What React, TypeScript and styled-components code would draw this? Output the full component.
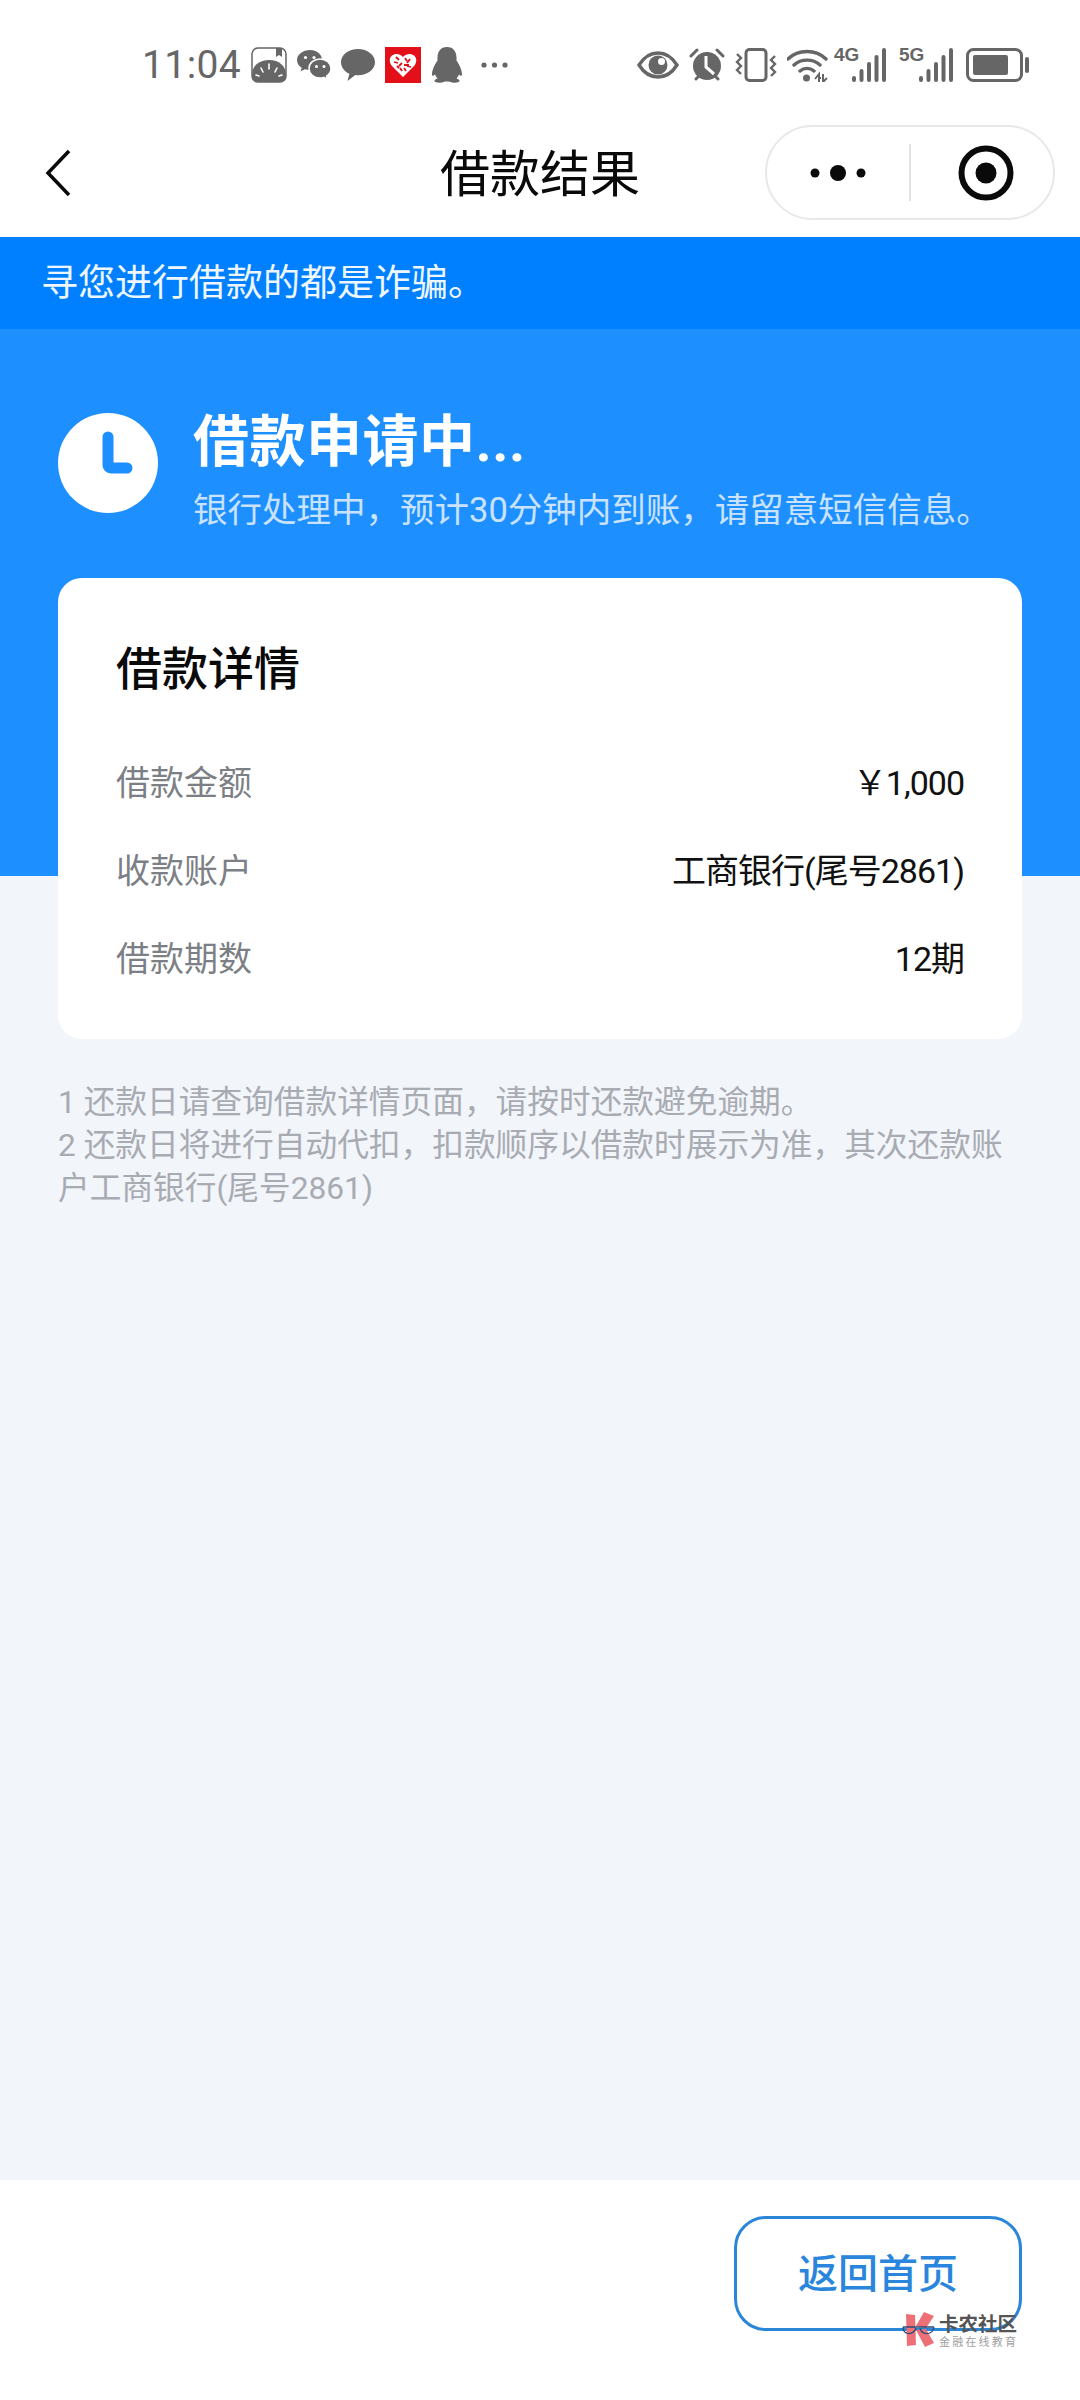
import React from "react";
import styled, { createGlobalStyle } from "styled-components";

const Global = createGlobalStyle`
  html, body { margin: 0; padding: 0; background: #f2f5fa; }
  body { font-family: Roboto, "Noto Sans CJK SC", "Liberation Sans", sans-serif; }
  * { box-sizing: border-box; }
`;

const Page = styled.div`
  width: 1080px;
  height: 2400px;
  display: flex;
  flex-direction: column;
  background: #f2f5fa;
  position: relative;
  overflow: hidden;
`;

const Header = styled.header`
  background: #fff;
  height: 237px;
  display: flex;
  flex-direction: column;
`;

const StatusBar = styled.div`
  height: 118px;
  padding: 47px 50px 0 142px;
  display: flex;
  justify-content: space-between;
  align-items: flex-start;
`;

const StatusGroup = styled.div`
  display: flex;
  align-items: center;
  height: 36px;
  gap: 10px;
`;

const Time = styled.span`
  font-size: 39px;
  line-height: 36px;
  color: #666;
  letter-spacing: 0.4px;
`;

const NavBar = styled.div`
  flex: 1;
  display: flex;
  align-items: center;
  justify-content: space-between;
  padding: 0 25px 10px 44px;
  position: relative;
`;

const NavTitle = styled.h1`
  position: absolute;
  left: 0;
  right: 0;
  top: 27px;
  margin: 0;
  text-align: center;
  font-size: 50px;
  line-height: 60px;
  font-weight: 400;
  color: #0a0a0a;
`;

const Capsule = styled.div`
  width: 290px;
  height: 95px;
  border: 2px solid #e8e8e8;
  border-radius: 48px;
  background: #fff;
  display: flex;
  align-items: center;
  padding-left: 42px;
  z-index: 1;
`;

const CapsuleDivider = styled.div`
  width: 2px;
  height: 57px;
  background: #e2e2e2;
  margin: 0 47px 0 42px;
`;

const Notice = styled.div`
  height: 92px;
  background: #0080ff;
  color: #eef7ff;
  font-size: 37px;
  line-height: 94px;
  padding-left: 41px;
`;

const Hero = styled.section`
  height: 547px;
  background: #1e8fff;
  padding: 84px 58px 0;
  display: flex;
  flex-direction: column;
`;

const StatusRow = styled.div`
  display: flex;
  gap: 35px;
  height: 165px;
  flex: none;
`;

const ClockBadge = styled.div`
  width: 100px;
  height: 100px;
  border-radius: 50%;
  background: #fff;
  flex: none;
`;

const StatusText = styled.div`
  display: flex;
  flex-direction: column;
`;

const StatusTitle = styled.div`
  font-size: 56px;
  line-height: 56px;
  font-weight: 700;
  color: #fff;
  margin-top: 1px;
  letter-spacing: 0.5px;
`;

const StatusSub = styled.div`
  font-size: 34.5px;
  line-height: 44px;
  color: #c9e3ff;
  margin-top: 18px;
  white-space: nowrap;
`;

const Card = styled.div`
  background: #fff;
  border-radius: 24px;
  height: 461px;
  flex: none;
  padding: 61px 58px 0;
`;

const CardTitle = styled.h2`
  margin: 0 0 37px;
  font-size: 46px;
  line-height: 60px;
  font-weight: 500;
  color: #0a0a0a;
`;

const Row = styled.div`
  height: 88px;
  display: flex;
  align-items: center;
  justify-content: space-between;
  font-size: 34px;
`;

const RowLabel = styled.span`
  color: #7c7f85;
`;

const RowValue = styled.span`
  color: #111;
  letter-spacing: -1px;
`;

const Notes = styled.div`
  margin: 163px 58px 0;
  padding-top: 42px;
  font-size: 31.7px;
  line-height: 43px;
  color: #a8abb2;
`;

const NoteLine = styled.div``;

const Spacer = styled.div`
  flex: 1;
`;

const Footer = styled.footer`
  height: 220px;
  background: #fff;
  padding: 36px 58px 0 0;
  display: flex;
  justify-content: flex-end;
  align-items: flex-start;
`;

const HomeButton = styled.button`
  width: 288px;
  height: 115px;
  border: 3px solid #2b86d8;
  border-radius: 32px;
  background: #fff;
  color: #2a86dc;
  font-family: inherit;
  font-size: 40px;
  font-weight: 500;
  padding: 0 0 5px;
`;

const Watermark = styled.div`
  position: absolute;
  left: 902px;
  top: 2312px;
  display: flex;
  gap: 3px;
  align-items: flex-start;
`;

const WatermarkText = styled.div`
  display: flex;
  flex-direction: column;
  padding-top: 2px;
`;

const WatermarkMain = styled.span`
  font-size: 19.5px;
  line-height: 21px;
  font-weight: 700;
  color: #555;
  white-space: nowrap;
`;

const WatermarkSub = styled.span`
  font-size: 11px;
  line-height: 15px;
  letter-spacing: 2.2px;
  color: #a0a0a0;
  white-space: nowrap;
`;

const G = "#666";

const AppIcon = () => (
  <svg width="36" height="36" viewBox="0 0 36 36">
    <rect x="1" y="1" width="34" height="34" rx="6" fill="#fff" stroke={G} strokeWidth="1.5" />
    <path d="M1 28C1 19 8 13 18 13s17 6 17 15v1a6 6 0 0 1-6 6H7a6 6 0 0 1-6-6z" fill={G} />
    <path d="M25 1h6v9l-3-2-3 2z" fill={G} />
    <path d="M18 17v5M10 21l2 4M26 21l-2 4M5 28l3 1M31 28l-3 1" stroke="#fff" strokeWidth="1.6" strokeLinecap="round" />
  </svg>
);

const WechatIcon = () => (
  <svg width="34" height="30" viewBox="0 0 34 30">
    <path d="M13 0C6 0 0 4.500 0 10c0 3.300 1.800 6 4.700 7.800L3.500 21.500l4.300-2.300c1.700.5 3.300.8 5.200.8 7 0 12-4.500 12-10S20 0 13 0z" fill={G} />
    <path d="M23 9c-6 0-11 4-11 9.500S17 28 23 28c1.400 0 2.700-.2 3.800-.6l3.700 2.100-.9-3.400c2.700-1.800 4.400-4.500 4.400-7.600C34 13 29 9 23 9z" fill={G} stroke="#fff" strokeWidth="1.500" />
    <circle cx="8.500" cy="7.500" r="1.600" fill="#fff" />
    <circle cx="17" cy="7.500" r="1.600" fill="#fff" />
    <circle cx="19.500" cy="16.500" r="1.500" fill="#fff" />
    <circle cx="27" cy="16.500" r="1.500" fill="#fff" />
  </svg>
);

const MessageIcon = () => (
  <svg width="34" height="32" viewBox="0 0 34 32">
    <path d="M17 0C7.600 0 0 5.700 0 13.200c0 5 3.400 9.300 8.400 11.600L6.500 32l7.800-5.900c.9.100 1.800.2 2.700.2 9.400 0 17-5.900 17-13.100S26.400 0 17 0z" fill={G} />
  </svg>
);

const RedIcon = () => (
  <svg width="36" height="36" viewBox="0 0 36 36">
    <rect width="36" height="36" fill="#e3101a" />
    <path d="M18 30L7 19c-3-3.500-3-8 0-10.500 3-2.500 8-2 11 1.500 3-3.500 8-4 11-1.500 3 2.500 3 7 0 10.500z" fill="#fff" />
    <path d="M11 10l3 3m-5 2l4 1m1 3l3-3m3-5l2 3m3-2l-3 4m-3 2h5m2 2l-4-1m-3 2l2 3m-6-3l2 3m-5-5l2 2" stroke="#e3101a" strokeWidth="1.800" />
  </svg>
);

const QQIcon = () => (
  <svg width="32" height="36" viewBox="0 0 32 36">
    <path d="M16 0c-6.500 0-9.500 5-9.500 10.500v3C4 17 1 23 1 27c0 2 1 2.500 3 .5.500 1.500 1.300 2.800 2.500 4-2 .7-3.500 1.500-3 2.800.5 1.200 4 1.700 7 1.200 2-.4 3.500-1 5.500-1s3.500.6 5.500 1c3 .5 6.500 0 7-1.200.5-1.300-1-2.100-3-2.800 1.200-1.200 2-2.500 2.500-4 2 2 3 1.500 3-.5 0-4-3-10-5.500-13.500v-3C25.500 5 22.500 0 16 0z" fill={G} />
  </svg>
);

const DotsHolder = styled.span`
  display: flex;
  margin-left: 8px;
`;

const DotsIcon = () => (
  <DotsHolder>
    <svg width="27" height="6" viewBox="0 0 27 6">
      <circle cx="3" cy="3" r="2.600" fill={G} />
      <circle cx="13.500" cy="3" r="2.600" fill={G} />
      <circle cx="24" cy="3" r="2.600" fill={G} />
    </svg>
  </DotsHolder>
);

const EyeIcon = () => (
  <svg width="42" height="28" viewBox="0 0 42 28">
    <path d="M2 14C7 6 13 2 21 2s14 4 19 12c-5 8-11 12-19 12S7 22 2 14z" fill="#fff" stroke={G} strokeWidth="3.400" />
    <circle cx="21" cy="14" r="9.500" fill={G} />
    <circle cx="24.500" cy="10.500" r="3.500" fill="#fff" />
  </svg>
);

const AlarmIcon = () => (
  <svg width="36" height="34" viewBox="0 0 36 34">
    <circle cx="18" cy="18" r="14" fill={G} />
    <path d="M17 8v11l8 7" stroke="#fff" strokeWidth="3" fill="none" />
    <path d="M2 8l6-6M34 8l-6-6M7 31l3-3M29 31l-3-3" stroke={G} strokeWidth="3" strokeLinecap="round" />
  </svg>
);

const VibrateIcon = () => (
  <svg width="42" height="34" viewBox="0 0 42 34">
    <rect x="11" y="1.500" width="20" height="31" rx="3.500" fill="none" stroke={G} strokeWidth="3" />
    <path d="M2 6l4 4-4 4 4 4-4 4 4 4M40 8l-4 4 4 4-4 4 4 4-4 4" fill="none" stroke={G} strokeWidth="2.400" />
  </svg>
);

const WifiIcon = () => (
  <svg width="41" height="34" viewBox="0 0 41 34">
    <path d="M1 11C11 1 29 1 39 11M7 17c7-6.500 19-6.500 26 0M13 23c4-3.500 10-3.500 14 0" fill="none" stroke={G} strokeWidth="3.400" strokeLinecap="round" />
    <circle cx="19.500" cy="30" r="3.500" fill={G} />
    <path d="M28 31l4-5v8M32 30h2M36 26v8l4-4" fill="none" stroke={G} strokeWidth="2" />
  </svg>
);

const Net = styled.span<{ $left: number; $right: number }>`
  display: block;
  width: 19px;
  font-family: "Liberation Sans Narrow", "Liberation Sans", sans-serif;
  font-size: 19px;
  line-height: 16px;
  font-weight: 700;
  color: ${G};
  align-self: flex-start;
  white-space: nowrap;
  margin-left: ${(p) => p.$left}px;
  margin-right: ${(p) => p.$right}px;
`;

const SignalIcon = () => (
  <svg width="36" height="34" viewBox="0 0 36 34">
    {[0, 1, 2, 3, 4].map((i) => (
      <rect key={i} x={1 + i * 7.500} y={28 - i * 7} width="4" height={6 + i * 7} rx="2" fill={G} />
    ))}
  </svg>
);

const BatteryHolder = styled.span`
  display: flex;
  margin-left: 2px;
`;

const BatteryIcon = () => (
  <BatteryHolder>
    <svg width="64" height="34" viewBox="0 0 64 34">
      <rect x="1.500" y="1.500" width="54" height="31" rx="6" fill="none" stroke={G} strokeWidth="3" />
      <rect x="7" y="7" width="35" height="20" rx="2" fill={G} />
      <rect x="59" y="9" width="4" height="16" rx="2" fill={G} />
    </svg>
  </BatteryHolder>
);

const BackIcon = () => (
  <svg width="30" height="50" viewBox="0 0 30 50">
    <path d="M25 3L4 25l21 22" fill="none" stroke="#0a0a0a" strokeWidth="3.500" />
  </svg>
);

const MoreIcon = () => (
  <svg width="58" height="18" viewBox="0 0 58 18">
    <circle cx="6" cy="9" r="4.500" fill="#0a0a0a" />
    <circle cx="29" cy="9" r="8" fill="#0a0a0a" />
    <circle cx="52" cy="9" r="4.500" fill="#0a0a0a" />
  </svg>
);

const TargetIcon = () => (
  <svg width="56" height="56" viewBox="0 0 56 56">
    <circle cx="28" cy="28" r="24.500" fill="none" stroke="#0a0a0a" strokeWidth="6" />
    <circle cx="28" cy="28" r="10.500" fill="#0a0a0a" />
  </svg>
);

const ClockHands = () => (
  <svg width="100" height="100" viewBox="0 0 100 100">
    <path d="M50 24V52a3 3 0 0 0 3 3H69" fill="none" stroke="#1e8fff" strokeWidth="11" strokeLinecap="round" strokeLinejoin="round" />
  </svg>
);

const KanongLogo = () => (
  <svg width="34" height="36" viewBox="0 0 34 36">
    <path d="M4 2l9 1 1 30-9 1z" fill="#ee7077" />
    <path d="M14 14L22 0l10 4-8 12z" fill="#ee7077" />
    <path d="M14 18l10-1 8 14-9 4z" fill="#ee7077" />
    <path d="M1 15h31" stroke="#2c4a78" strokeWidth="1.500" />
    <path d="M1 15c0 8 10 9 13 1M18 16c2 8 13 7 14-1" fill="none" stroke="#2c4a78" strokeWidth="1.200" />
  </svg>
);

const rows = [
  { label: "借款金额", value: "￥1,000" },
  { label: "收款账户", value: "工商银行(尾号2861)" },
  { label: "借款期数", value: "12期" },
];

export default function App() {
  return (
    <Page>
      <Global />
      <Header>
        <StatusBar>
          <StatusGroup>
            <Time>11:04</Time>
            <AppIcon />
            <WechatIcon />
            <MessageIcon />
            <RedIcon />
            <QQIcon />
            <DotsIcon />
          </StatusGroup>
          <StatusGroup>
            <EyeIcon />
            <AlarmIcon />
            <VibrateIcon />
            <WifiIcon />
            <Net $left={-4} $right={-12}>4G</Net>
            <SignalIcon />
            <Net $left={2} $right={-10}>5G</Net>
            <SignalIcon />
            <BatteryIcon />
          </StatusGroup>
        </StatusBar>
        <NavBar>
          <BackIcon />
          <NavTitle>借款结果</NavTitle>
          <Capsule>
            <MoreIcon />
            <CapsuleDivider />
            <TargetIcon />
          </Capsule>
        </NavBar>
      </Header>
      <Notice>寻您进行借款的都是诈骗。</Notice>
      <Hero>
        <StatusRow>
          <ClockBadge>
            <ClockHands />
          </ClockBadge>
          <StatusText>
            <StatusTitle>借款申请中...</StatusTitle>
            <StatusSub>银行处理中，预计30分钟内到账，请留意短信信息。</StatusSub>
          </StatusText>
        </StatusRow>
        <Card>
          <CardTitle>借款详情</CardTitle>
          {rows.map((r) => (
            <Row key={r.label}>
              <RowLabel>{r.label}</RowLabel>
              <RowValue>{r.value}</RowValue>
            </Row>
          ))}
        </Card>
      </Hero>
      <Notes>
        <NoteLine>1 还款日请查询借款详情页面，请按时还款避免逾期。</NoteLine>
        <NoteLine>2 还款日将进行自动代扣，扣款顺序以借款时展示为准，其次还款账户工商银行(尾号2861)</NoteLine>
      </Notes>
      <Spacer />
      <Footer>
        <HomeButton>返回首页</HomeButton>
      </Footer>
      <Watermark>
        <KanongLogo />
        <WatermarkText>
          <WatermarkMain>卡农社区</WatermarkMain>
          <WatermarkSub>金融在线教育</WatermarkSub>
        </WatermarkText>
      </Watermark>
    </Page>
  );
}
